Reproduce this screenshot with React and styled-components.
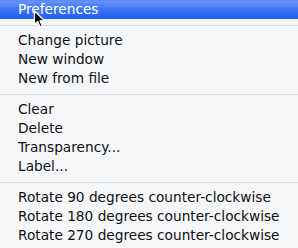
import React from "react";
import styled, { createGlobalStyle } from "styled-components";

const Global = createGlobalStyle`
  html, body { margin: 0; padding: 0; background: #f5f6f8; }
  body { font-family: "DejaVu Sans", "Liberation Sans", sans-serif; }
`;

const Menu = styled.div`
  position: relative;
  width: 298px;
  height: 248px;
  background: #f5f6f8;
  font-size: 13.7px;
  color: #111;
  overflow: hidden;
`;

const Item = styled.div`
  height: 19px;
  line-height: 19px;
  padding-left: 18px;
  white-space: nowrap;
  color: ${(p) => (p.$active ? "#fff" : "#111")};
  background: ${(p) =>
    p.$active
      ? "linear-gradient(#5a7fe0 0px, #6a93f7 1px, #3f76f5 9px, #1f5ef0 19px)"
      : "transparent"};
`;

const Separator = styled.div`
  height: 12px;
  display: flex;
  align-items: center;
  &::after {
    content: "";
    flex: 1;
    height: 1px;
    background: #dcdde0;
  }
`;

const Cursor = styled.svg`
  position: absolute;
  left: 33px;
  top: 10px;
  width: 13px;
  height: 18px;
`;

const groups = [
  ["Change picture", "New window", "New from file"],
  ["Clear", "Delete", "Transparency...", "Label..."],
  [
    "Rotate 90 degrees counter-clockwise",
    "Rotate 180 degrees counter-clockwise",
    "Rotate 270 degrees counter-clockwise",
  ],
];

export default function App() {
  return (
    <>
      <Global />
      <Menu>
        <Item $active>Preferences</Item>
        {groups.map((g, i) => (
          <React.Fragment key={i}>
            <Separator />
            {g.map((t) => (
              <Item key={t}>{t}</Item>
            ))}
          </React.Fragment>
        ))}
        <Cursor viewBox="0 0 13 18">
          <path
            d="M1.5 1 L1.5 14.5 L4.8 11.5 L7 16.8 L9.2 15.8 L7 10.8 L11.5 10.8 Z"
            fill="#000"
            stroke="#fff"
            strokeWidth="1.2"
            strokeLinejoin="round"
          />
        </Cursor>
      </Menu>
    </>
  );
}
